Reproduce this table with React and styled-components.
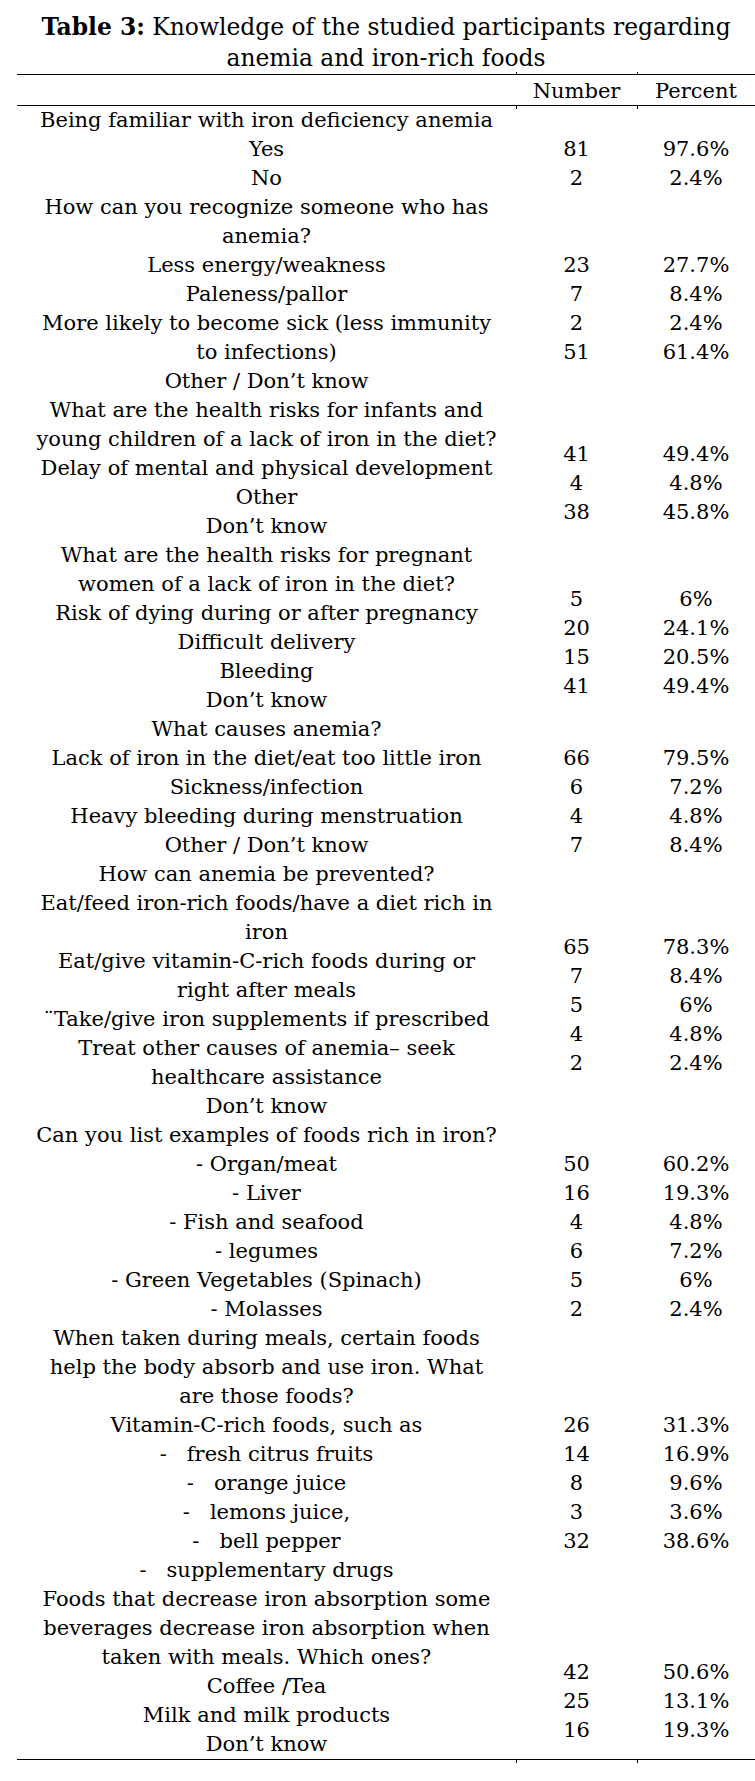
import React from "react";
import styled, { createGlobalStyle } from "styled-components";

const LINE = 29;

const GlobalStyle = createGlobalStyle`
  body {
    margin: 0;
    background: #fff;
    color: #000;
    font-family: "DejaVu Serif", "Liberation Serif", serif;
  }
`;

const Page = styled.div`
  width: 755px;
  padding: 12px 0 0 17px;
  box-sizing: border-box;
`;

const Table = styled.div`
  width: 738px;
`;

const Caption = styled.div`
  font-size: 23.4px;
  line-height: 31px;
  text-align: center;
`;

const CaptionLabel = styled.span`
  font-weight: 700;
`;

const Grid = styled.div`
  display: grid;
  grid-template-columns: 499px 121px 118px;
  font-size: 21px;
  line-height: ${LINE}px;
`;

const HeaderRow = styled(Grid)`
  border-top: 1.5px solid #000;
  border-bottom: 1.5px solid #000;
  padding-top: 2px;
  line-height: 28px;
`;

const HeaderCell = styled.div`
  position: relative;
  text-align: center;

  &::before,
  &::after {
    content: "";
    position: absolute;
    left: 0;
    width: 1px;
    height: 3px;
    background: #000;
  }

  &::before {
    top: -5px;
  }

  &::after {
    bottom: -4px;
  }
`;

const Body = styled.div`
  border-bottom: 1.5px solid #000;
`;

const Section = styled(Grid)``;

const TextCell = styled.div`
  text-align: center;
`;

const Line = styled.div`
  white-space: pre;
`;

const ValueCell = styled.div`
  padding-top: ${(p) => p.$start * LINE}px;
  text-align: center;
`;

const Foot = styled.div`
  display: grid;
  grid-template-columns: 499px 121px 118px;
  height: 3px;
`;

const FootTick = styled.div`
  border-left: ${(p) => (p.$tick ? "1px solid #000" : "none")};
`;

const sections = [
  {
    lines: ["Being familiar with iron deficiency anemia", "Yes", "No"],
    start: 1,
    values: [
      ["81", "97.6%"],
      ["2", "2.4%"],
    ],
  },
  {
    lines: [
      "How can you recognize someone who has",
      "anemia?",
      "Less energy/weakness",
      "Paleness/pallor",
      "More likely to become sick (less immunity",
      "to infections)",
      "Other / Don’t know",
    ],
    start: 2,
    values: [
      ["23", "27.7%"],
      ["7", "8.4%"],
      ["2", "2.4%"],
      ["51", "61.4%"],
    ],
  },
  {
    lines: [
      "What are the health risks for infants and",
      "young children of a lack of iron in the diet?",
      "Delay of mental and physical development",
      "Other",
      "Don’t know",
    ],
    start: 1.5,
    values: [
      ["41", "49.4%"],
      ["4", "4.8%"],
      ["38", "45.8%"],
    ],
  },
  {
    lines: [
      "What are the health risks for pregnant",
      "women of a lack of iron in the diet?",
      "Risk of dying during or after pregnancy",
      "Difficult delivery",
      "Bleeding",
      "Don’t know",
    ],
    start: 1.5,
    values: [
      ["5", "6%"],
      ["20", "24.1%"],
      ["15", "20.5%"],
      ["41", "49.4%"],
    ],
  },
  {
    lines: [
      "What causes anemia?",
      "Lack of iron in the diet/eat too little iron",
      "Sickness/infection",
      "Heavy bleeding during menstruation",
      "Other / Don’t know",
    ],
    start: 1,
    values: [
      ["66", "79.5%"],
      ["6", "7.2%"],
      ["4", "4.8%"],
      ["7", "8.4%"],
    ],
  },
  {
    lines: [
      "How can anemia be prevented?",
      "Eat/feed iron-rich foods/have a diet rich in",
      "iron",
      "Eat/give vitamin-C-rich foods during or",
      "right after meals",
      "¨Take/give iron supplements if prescribed",
      "Treat other causes of anemia– seek",
      "healthcare assistance",
      "Don’t know",
    ],
    start: 2.5,
    values: [
      ["65", "78.3%"],
      ["7", "8.4%"],
      ["5", "6%"],
      ["4", "4.8%"],
      ["2", "2.4%"],
    ],
  },
  {
    lines: [
      "Can you list examples of foods rich in iron?",
      "- Organ/meat",
      "- Liver",
      "- Fish and seafood",
      "- legumes",
      "- Green Vegetables (Spinach)",
      "- Molasses",
    ],
    start: 1,
    values: [
      ["50", "60.2%"],
      ["16", "19.3%"],
      ["4", "4.8%"],
      ["6", "7.2%"],
      ["5", "6%"],
      ["2", "2.4%"],
    ],
  },
  {
    lines: [
      "When taken during meals, certain foods",
      "help the body absorb and use iron. What",
      "are those foods?",
      "Vitamin-C-rich foods, such as",
      "-   fresh citrus fruits",
      "-   orange juice",
      "-   lemons juice,",
      "-   bell pepper",
      "-   supplementary drugs",
    ],
    start: 3,
    values: [
      ["26", "31.3%"],
      ["14", "16.9%"],
      ["8", "9.6%"],
      ["3", "3.6%"],
      ["32", "38.6%"],
    ],
  },
  {
    lines: [
      "Foods that decrease iron absorption some",
      "beverages decrease iron absorption when",
      "taken with meals. Which ones?",
      "Coffee /Tea",
      "Milk and milk products",
      "Don’t know",
    ],
    start: 2.5,
    values: [
      ["42", "50.6%"],
      ["25", "13.1%"],
      ["16", "19.3%"],
    ],
  },
];

const App = () => (
  <Page>
    <GlobalStyle />
    <Table>
      <Caption>
        <CaptionLabel>Table 3:</CaptionLabel> Knowledge of the studied
        participants regarding
        <br />
        anemia and iron-rich foods
      </Caption>
      <HeaderRow>
        <div />
        <HeaderCell>Number</HeaderCell>
        <HeaderCell>Percent</HeaderCell>
      </HeaderRow>
      <Body>
        {sections.map((section, i) => (
          <Section key={i}>
            <TextCell>
              {section.lines.map((line, j) => (
                <Line key={j}>{line}</Line>
              ))}
            </TextCell>
            <ValueCell $start={section.start}>
              {section.values.map(([n], j) => (
                <Line key={j}>{n}</Line>
              ))}
            </ValueCell>
            <ValueCell $start={section.start}>
              {section.values.map(([, pct], j) => (
                <Line key={j}>{pct}</Line>
              ))}
            </ValueCell>
          </Section>
        ))}
      </Body>
      <Foot>
        <FootTick />
        <FootTick $tick />
        <FootTick $tick />
      </Foot>
    </Table>
  </Page>
);

export default App;
